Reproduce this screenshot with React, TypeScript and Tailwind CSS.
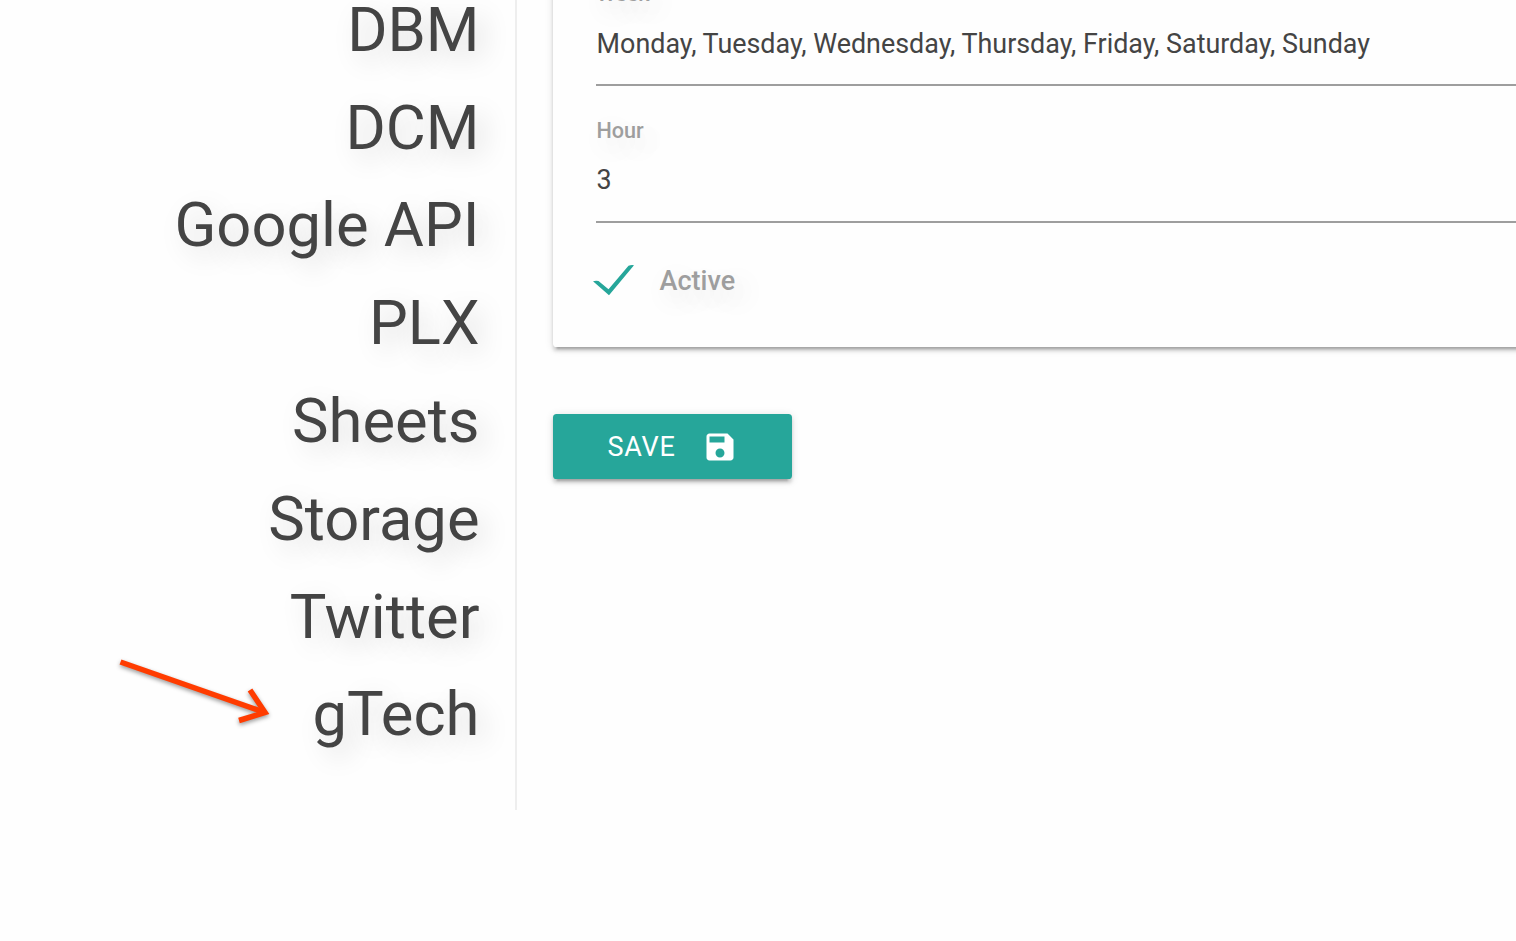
const sources = ['DBM', 'DCM', 'Google API', 'PLX', 'Sheets', 'Storage', 'Twitter', 'gTech'];

const softShadow = '[text-shadow:8px_9px_27px_rgba(0,0,0,0.15)]';
const depth =
  'shadow-[0_3.6px_3.6px_0_rgba(0,0,0,0.14),0_5.4px_1.8px_-3.6px_rgba(0,0,0,0.2),0_1.8px_9px_0_rgba(0,0,0,0.12)]';

function Sidebar() {
  return (
    <nav className="h-[810px] w-[517px] shrink-0 border-r-2 border-[#eeeeee] pr-[35.5px]">
      <ul className="-mt-[18.1px] text-right text-[61.5px] leading-[97.77px]">
        {sources.map((name) => (
          <li key={name} className={softShadow}>
            {name}
          </li>
        ))}
      </ul>
    </nav>
  );
}

function Field({ label, value }: { label: string; value: string }) {
  return (
    <div className="flex h-[136.6px] flex-col border-b-2 border-[#9e9e9e]">
      <label className={`mt-[31px] pl-[0.5px] text-[21.6px] font-medium leading-[27px] text-[#9e9e9e] ${softShadow}`}>
        {label}
      </label>
      <span className="mt-[16.2px] pl-[0.6px] text-[26.9px] leading-[40px]">{value}</span>
    </div>
  );
}

function Arrow() {
  return (
    <svg
      className="absolute left-[110px] top-[650px] drop-shadow-[0_2px_2px_rgba(0,0,0,0.4)]"
      width="170"
      height="85"
      viewBox="110 650 170 85"
      fill="none"
      stroke="#ff3c00"
      strokeWidth="5.5"
    >
      <path d="M120.5 662L265 712.5" />
      <path d="M250 690L265 712.5L239 720.5" />
    </svg>
  );
}

export default function App() {
  return (
    <div className="relative flex h-[941px] w-full overflow-hidden bg-[#fefefe] font-['Roboto',sans-serif] text-[#444444]">
      <Sidebar />
      <main className="ml-9 min-w-0 flex-1">
        <section className={`-mr-6 -mt-[50.6px] h-[397.6px] rounded-[3.6px] bg-[#fefefe] pl-[43px] ${depth}`}>
          <Field label="Week" value="Monday, Tuesday, Wednesday, Thursday, Friday, Saturday, Sunday" />
          <Field label="Hour" value="3" />
          <div className="mt-[38.4px] flex h-10 items-center">
            <svg className="-ml-[3px] mb-[2px]" width="41" height="32" viewBox="0 0 41 32" fill="#26a69a">
              <path d="M0 17.2Q3 16.2 5.5 17L15.5 25.2L35.5 1.8Q38 .7 41 1.2L16 31.2Z" />
            </svg>
            <label className={`ml-[25.6px] text-[27px] font-medium leading-[40px] text-[#9e9e9e] ${softShadow}`}>
              Active
            </label>
          </div>
        </section>
        <button
          className={`mt-[67px] flex h-[65px] w-[239px] items-center rounded-[3.6px] bg-[#26a69a] pl-[54.5px] text-[27px] tracking-[0.8px] text-white ${depth}`}
        >
          <span className="pt-[2px]">SAVE</span>
          <svg className="ml-[26.5px]" width="36" height="36" viewBox="0 0 24 24" fill="currentColor">
            <path d="M17 3H5c-1.11 0-2 .9-2 2v14c0 1.1.89 2 2 2h14c1.1 0 2-.9 2-2V7l-4-4zm-5 16c-1.66 0-3-1.34-3-3s1.34-3 3-3 3 1.34 3 3-1.34 3-3 3zm3-10H5V5h10v4z" />
          </svg>
        </button>
      </main>
      <Arrow />
    </div>
  );
}
